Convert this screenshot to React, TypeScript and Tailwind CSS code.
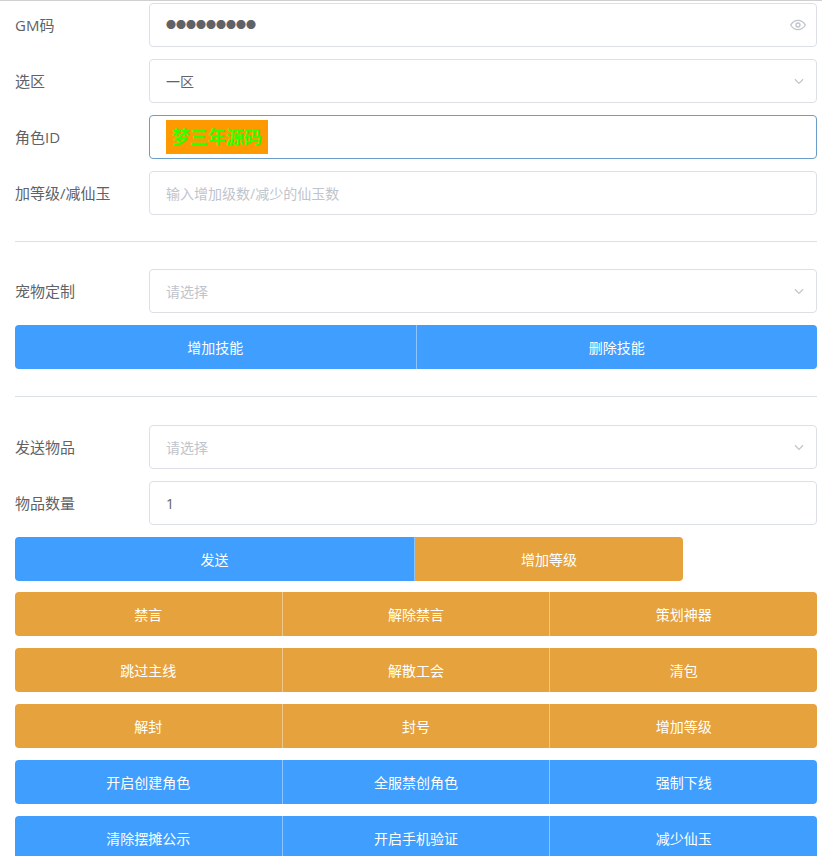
import React from "react";

const F = { fontFamily: '"Open Sans","Noto Sans CJK SC",sans-serif' };

function Row({ label, children }: { label: string; children: React.ReactNode }) {
  return (
    <div className="flex items-center h-[44px] mb-[12px] shrink-0">
      <div className="w-[134px] text-[15px] text-[#606266]">{label}</div>
      <div className="flex-1 h-full">{children}</div>
    </div>
  );
}

const Chevron = () => (
  <svg width="14" height="14" viewBox="0 0 24 24" fill="none" stroke="#c0c4cc" strokeWidth="2"><path d="M5 9l7 7 7-7" /></svg>
);

function Box({ children, focus, right }: { children?: React.ReactNode; focus?: boolean; right?: React.ReactNode }) {
  return (
    <div className={`h-full flex items-center justify-between rounded-[4px] border ${focus ? "border-[#6a9ec9]" : "border-[#dcdfe6]"} bg-white pl-[16px] pr-[10px] text-[14px]`}>
      <div className="flex items-center">{children}</div>
      {right}
    </div>
  );
}

const Btn = ({ t, c, last }: { t: string; c: string; last?: boolean }) => (
  <div className={`flex-1 flex items-center justify-center text-white text-[14px] ${c} ${last ? "" : "border-r border-[#ffffff66]"}`}>{t}</div>
);

function Grid3({ items, c }: { items: string[]; c: string }) {
  return (
    <div className="flex h-[44px] mb-[12px] shrink-0 rounded-[4px] overflow-hidden">
      {items.map((t, i) => <Btn key={t + i} t={t} c={c} last={i === 2} />)}
    </div>
  );
}

export default function App() {
  const O = "bg-[#e6a23c]";
  const B = "bg-[#409eff]";
  return (
    <div style={F} className="w-[822px] h-[856px] overflow-hidden bg-white border-t border-[#d0d0d0] pl-[15px] pr-[5px] pt-[2px] flex flex-col">
      <Row label="GM码">
        <Box right={<svg width="16" height="12" viewBox="0 0 24 16" fill="none" stroke="#c0c4cc" strokeWidth="2"><path d="M1 8c3-5 7-7 11-7s8 2 11 7c-3 5-7 7-11 7S4 13 1 8z" /><circle cx="12" cy="8" r="3" /></svg>}>
          <span className="text-[#606266] tracking-[0px] text-[10px]">●●●●●●●●●</span>
        </Box>
      </Row>
      <Row label="选区"><Box right={<Chevron />}><span className="text-[#606266]">一区</span></Box></Row>
      <Row label="角色ID">
        <Box focus><span className="bg-[#ff9900] text-[#33ff00] font-bold text-[18px] px-[6px] h-[34px] flex items-center">梦三年源码</span></Box>
      </Row>
      <Row label="加等级/减仙玉"><Box><span className="text-[#c0c4cc]">输入增加级数/减少的仙玉数</span></Box></Row>
      <div className="border-t border-[#dcdfe6] mt-[14px] mb-[27px] shrink-0" />
      <Row label="宠物定制"><Box right={<Chevron />}><span className="text-[#c0c4cc]">请选择</span></Box></Row>
      <div className="flex h-[44px] shrink-0 rounded-[4px] overflow-hidden">
        <Btn t="增加技能" c={B} /><Btn t="删除技能" c={B} last />
      </div>
      <div className="border-t border-[#dcdfe6] mt-[27px] mb-[28px] shrink-0" />
      <Row label="发送物品"><Box right={<Chevron />}><span className="text-[#c0c4cc]">请选择</span></Box></Row>
      <Row label="物品数量"><Box><span className="text-[#606266]">1</span></Box></Row>
      <div className="flex h-[44px] mb-[11px] shrink-0 w-[668px] rounded-[4px] overflow-hidden">
        <div className={`w-[400px] flex items-center justify-center text-white text-[14px] ${B} border-r border-[#ffffff66]`}>发送</div>
        <div className={`flex-1 flex items-center justify-center text-white text-[14px] ${O}`}>增加等级</div>
      </div>
      <Grid3 items={["禁言", "解除禁言", "策划神器"]} c={O} />
      <Grid3 items={["跳过主线", "解散工会", "清包"]} c={O} />
      <Grid3 items={["解封", "封号", "增加等级"]} c={O} />
      <Grid3 items={["开启创建角色", "全服禁创角色", "强制下线"]} c={B} />
      <Grid3 items={["清除摆摊公示", "开启手机验证", "减少仙玉"]} c={B} />
    </div>
  );
}
